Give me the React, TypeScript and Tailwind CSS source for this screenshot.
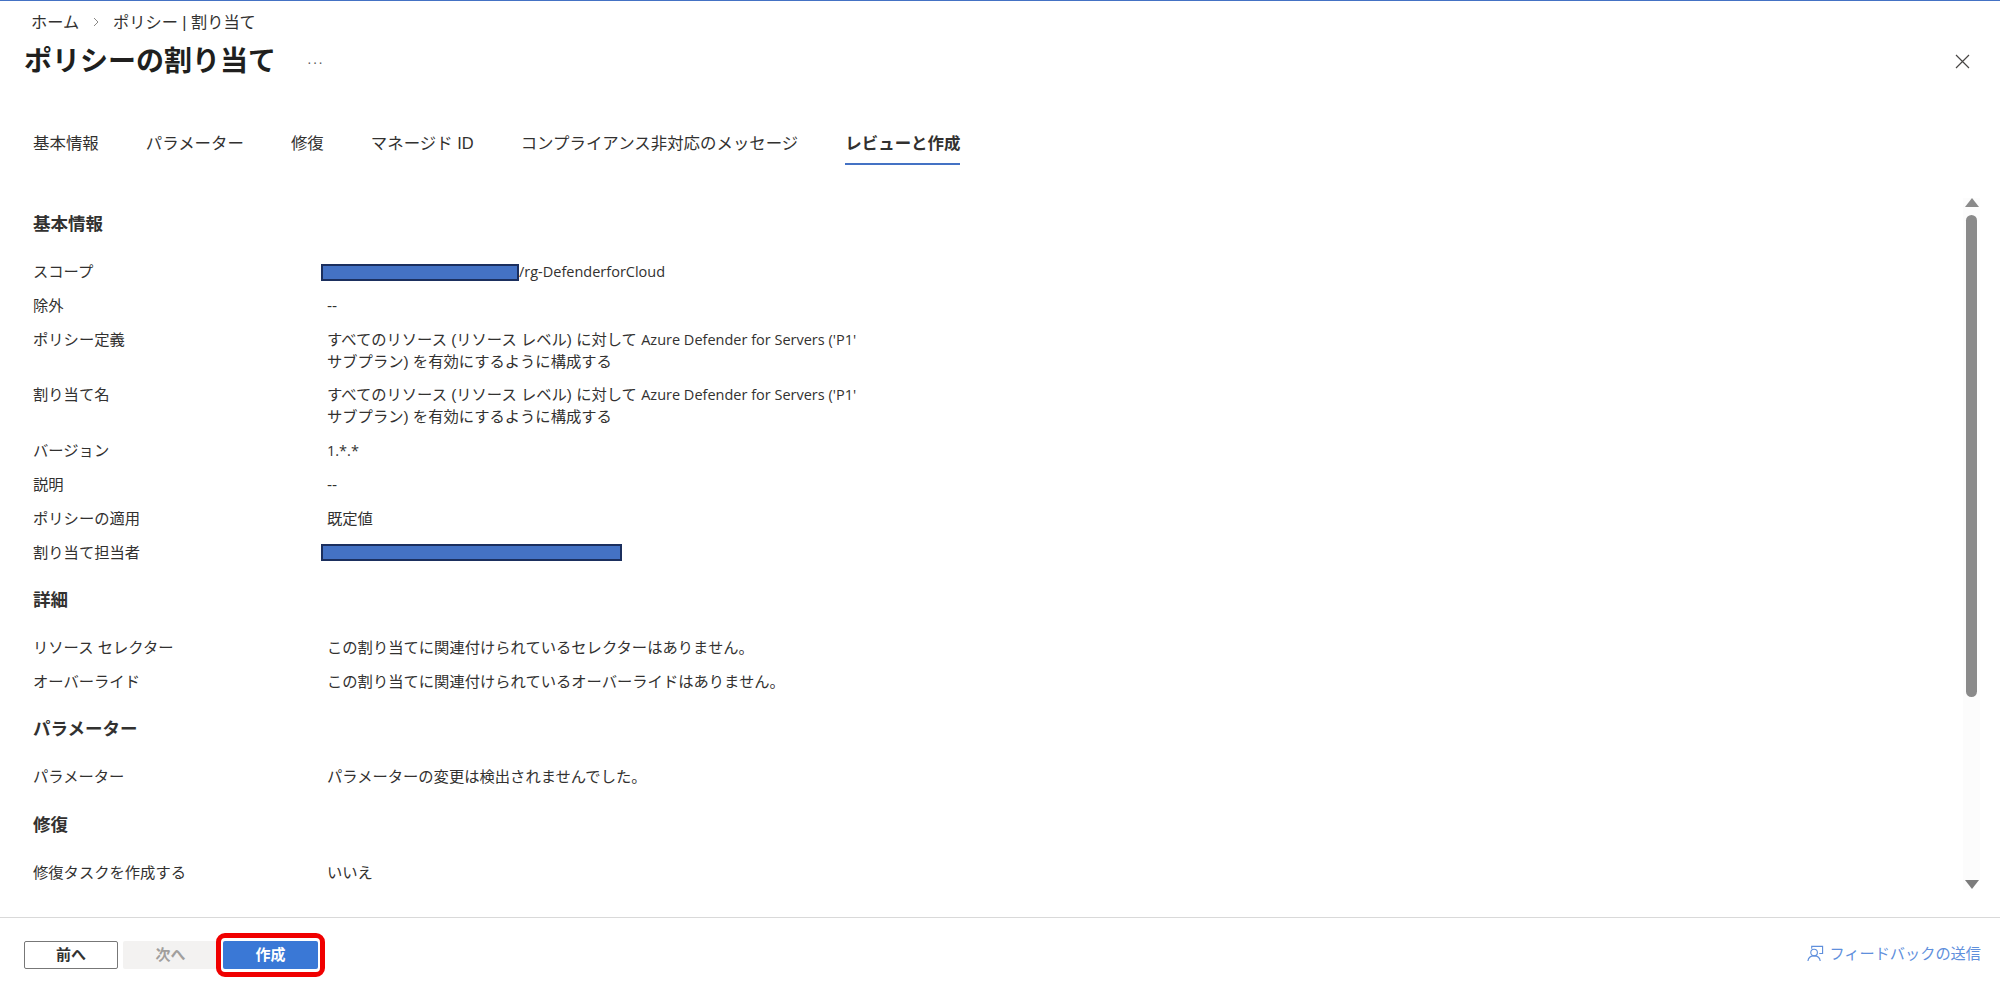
import React from "react";

const font = { fontFamily: '"Liberation Sans","Noto Sans CJK JP",sans-serif' };

function Row({ label, children }: { label: string; children: React.ReactNode }) {
  return (
    <div className="flex mb-[11.8px] text-[15.3px] leading-[22px] text-[#323130]">
      <div className="w-[294px] shrink-0">{label}</div>
      <div className="w-[535px]">{children}</div>
    </div>
  );
}

function Section({ title, children }: { title: string; children: React.ReactNode }) {
  return (
    <section className="mb-[25.5px]">
      <h2 className="text-[17.5px] leading-[22px] font-bold text-[#323130] mb-[26px]">{title}</h2>
      {children}
    </section>
  );
}

const Redact = ({ w }: { w: string }) => (
  <span className={`inline-block h-[17px] bg-[#4472c4] border-2 border-[#1b2f5e] -ml-[6px] align-middle ${w}`} />
);

const Latin = ({ children }: { children: React.ReactNode }) => (
  <span className="font-['Open_Sans'] text-[14.5px]">{children}</span>
);

const tabs = ["基本情報", "パラメーター", "修復", "マネージド ID", "コンプライアンス非対応のメッセージ"];
const desc = (
  <>
    すべてのリソース (リソース レベル) に対して <Latin>Azure Defender for Servers ('P1'</Latin> サブプラン) を有効にするように構成する
  </>
);

export default function App() {
  return (
    <div style={font} className="h-[985px] w-[2000px] flex flex-col bg-white border-t border-t-[#4472c4] overflow-hidden">
      <header className="h-[82px] shrink-0 pl-[31px] pr-[30px] pt-[11px]">
        <div className="flex items-center h-[20px] text-[16.2px] text-[#323130]">
          <span>ホーム</span>
          <svg className="mx-[13px]" width="8" height="10" viewBox="0 0 8 10" fill="none" stroke="#8a8886" strokeWidth="1"><path d="M2 1l4 4-4 4" /></svg>
          <span>ポリシー | 割り当て</span>
        </div>
        <div className="flex items-center h-[40px] mt-[10px] -ml-[7px]">
          <h1 className="text-[28px] leading-[40px] font-bold text-[#201f1e]">ポリシーの割り当て</h1>
          <span className="ml-[31px] text-[14px] text-[#605e5c] tracking-[1px]">···</span>
          <svg className="ml-auto -mt-[1px]" width="15" height="15" viewBox="0 0 15 15" stroke="#484644" strokeWidth="1.2"><path d="M1 1l13 13M14 1L1 14" /></svg>
        </div>
      </header>

      <nav className="h-[47px] mt-[35px] shrink-0 flex items-start pl-[33px] gap-[47px] text-[16.45px] leading-[24px] text-[#323130]">
        {tabs.map((t) => (
          <span key={t} className="pt-[13px]">{t}</span>
        ))}
        <span className="pt-[13px] h-[47px] font-bold border-b-2 border-b-[#4472c4]">レビューと作成</span>
      </nav>

      <div className="flex-1 flex min-h-0">
        <main className="flex-1 pl-[33px] pt-[48px] overflow-hidden">
          <Section title="基本情報">
            <Row label="スコープ"><span className="flex items-center"><Redact w="w-[198px]" /><Latin>/rg-DefenderforCloud</Latin></span></Row>
            <Row label="除外">--</Row>
            <Row label="ポリシー定義">{desc}</Row>
            <Row label="割り当て名">{desc}</Row>
            <Row label="バージョン"><Latin>1.*.*</Latin></Row>
            <Row label="説明">--</Row>
            <Row label="ポリシーの適用">既定値</Row>
            <Row label="割り当て担当者"><span className="flex items-center h-[22px]"><Redact w="w-[301px]" /></span></Row>
          </Section>
          <Section title="詳細">
            <Row label="リソース セレクター">この割り当てに関連付けられているセレクターはありません。</Row>
            <Row label="オーバーライド">この割り当てに関連付けられているオーバーライドはありません。</Row>
          </Section>
          <Section title="パラメーター">
            <Row label="パラメーター">パラメーターの変更は検出されませんでした。</Row>
          </Section>
          <Section title="修復">
            <Row label="修復タスクを作成する">いいえ</Row>
          </Section>
        </main>

        <aside className="w-[37px] shrink-0 pr-[20px] pt-[33px] pb-[27px] flex flex-col items-center">
          <div className="w-[17px] h-full bg-[#fcfcfc] flex flex-col items-center">
            <svg width="14" height="10" viewBox="0 0 14 10" fill="#8a8a8a"><path d="M7 0l7 9H0z" /></svg>
            <div className="w-[11px] h-[482px] mt-[7px] rounded-t-[6px] rounded-b-[6px] bg-[#8a8a8a]" />
            <svg className="mt-auto" width="14" height="10" viewBox="0 0 14 10" fill="#7a7a7a"><path d="M0 0h14L7 9z" /></svg>
          </div>
        </aside>
      </div>

      <footer className="h-[68px] shrink-0 border-t border-t-[#d9d9d9] flex items-center pl-[24px] pr-[19px] text-[15px] pt-[5px]">
        <button className="w-[94px] h-[28px] mt-[2px] rounded-[2px] border border-[#777] font-bold text-[#323130]">前へ</button>
        <button className="w-[95px] h-[28px] mt-[2px] ml-[5px] rounded-[2px] bg-[#f3f2f1] font-bold text-[#a19f9d]">次へ</button>
        <div className="-ml-[2px] mt-[2px] px-[2px] py-[3px] border-[5px] border-[#f00000] rounded-[9px] bg-white">
          <button className="block w-[95px] h-[28px] rounded-[2px] bg-[#3a78d6] font-bold text-white">作成</button>
        </div>
        <div className="ml-auto flex items-center gap-[5px] text-[15.2px] text-[#5f8fdc]">
          <svg width="17" height="17" viewBox="0 0 18 18" fill="none" stroke="#5f8fdc" strokeWidth="1.2">
            <path d="M5 4V1.500h11.500V9H13" />
            <circle cx="7.500" cy="8" r="3.500" />
            <path d="M1 17c.3-3.500 3-5.500 6.500-5.500S13.700 13.500 14 17" />
          </svg>
          <span>フィードバックの送信</span>
        </div>
      </footer>
    </div>
  );
}
